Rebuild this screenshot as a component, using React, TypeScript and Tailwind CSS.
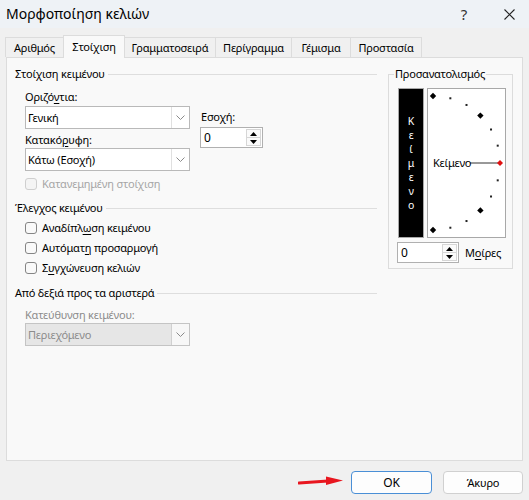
import React from "react";

const Chevron = () => (
  <svg width="9" height="5" viewBox="0 0 9 5">
    <path d="M0.5 0.5 L4.5 4.5 L8.5 0.5" stroke="#8a8a8a" strokeWidth="1" fill="none" />
  </svg>
);

function Select({ value, disabled }: { value: string; disabled?: boolean }) {
  return (
    <div
      className={`flex h-[23px] w-[165px] items-stretch border ${
        disabled ? "border-[#c4c4c4] bg-[#e6e6e6]" : "border-[#b9b9b9] bg-white"
      }`}
    >
      <div className={`flex flex-1 items-center pl-[2px] ${disabled ? "text-[#8c8c8c]" : "text-black"}`}>{value}</div>
      <div
        className={`flex w-[18px] items-center justify-center border-l ${
          disabled ? "border-[#d0d0d0] bg-[#f7f7f7]" : "border-[#e0e0e0] bg-white"
        }`}
      >
        <Chevron />
      </div>
    </div>
  );
}

function Spin({ w }: { w: string }) {
  return (
    <div className={`flex h-[21px] ${w} items-stretch border border-[#b0b0b0] bg-white`}>
      <div className="flex flex-1 items-center pl-[3px] text-[12px]">0</div>
      <div className="my-[1px] mr-[1px] flex w-[15px] flex-col border border-[#d6d6d6] bg-[#fafafa]">
        <div className="flex flex-1 items-center justify-center border-b border-[#d6d6d6]">
          <svg width="7" height="4" viewBox="0 0 7 4">
            <path d="M3.5 0 L7 4 L0 4Z" fill="#000" />
          </svg>
        </div>
        <div className="flex flex-1 items-center justify-center">
          <svg width="7" height="4" viewBox="0 0 7 4">
            <path d="M0 0 L7 0 L3.5 4Z" fill="#000" />
          </svg>
        </div>
      </div>
    </div>
  );
}

function Check({ label, disabled }: { label: React.ReactNode; disabled?: boolean }) {
  return (
    <div className="flex h-[16px] items-center">
      <div
        className={`h-[12px] w-[12px] rounded-[3px] border ${
          disabled ? "border-[#cfcfcf] bg-[#f4f4f4]" : "border-[#858585] bg-[#f9f9f9]"
        }`}
      />
      <span className={`ml-[5px] ${disabled ? "text-[#a6a6a6]" : "text-black"}`}>{label}</span>
    </div>
  );
}

function Header({ text }: { text: string }) {
  return (
    <div className="flex h-[16px] items-center">
      <span>{text}</span>
      <div className="ml-[3px] h-px flex-1 bg-[#dedede]" />
    </div>
  );
}

const U = ({ children }: { children: React.ReactNode }) => (
  <span className="underline decoration-1 underline-offset-2">{children}</span>
);

function Dial() {
  const cx = 5;
  const cy = 74;
  const r = 67;
  const angles = [90, 75, 60, 45, 30, 15, 0, -15, -30, -45, -60, -75, -90];
  return (
    <div className="relative h-[150px] w-[79px] border border-[#a8a8a8] bg-white">
      <svg className="absolute left-0 top-0" width="77" height="148" viewBox="0 0 77 148">
        <line x1="42" y1="74" x2="70" y2="74" stroke="#333" strokeWidth="1" />
        {angles.map((a) => {
          const rad = (a * Math.PI) / 180;
          const x = cx + r * Math.cos(rad);
          const y = cy - r * Math.sin(rad);
          if (a === 0)
            return (
              <polygon
                key={a}
                points={`${x},${y - 3} ${x + 3},${y} ${x},${y + 3} ${x - 3},${y}`}
                fill="#e01010"
              />
            );
          if (a % 45 === 0)
            return (
              <polygon
                key={a}
                points={`${x},${y - 3.2} ${x + 3.2},${y} ${x},${y + 3.2} ${x - 3.2},${y}`}
                fill="#000"
              />
            );
          return <rect key={a} x={x - 1} y={y - 1} width="2" height="2" fill="#222" />;
        })}
      </svg>
      <span className="absolute left-[5px] top-[66px] leading-[16px]">Κείμενο</span>
    </div>
  );
}

export default function App() {
  const tabs = [
    { t: "Αριθμός", w: "w-[59px]" },
    { t: "Στοίχιση", w: "w-[62px]", sel: true },
    { t: "Γραμματοσειρά", w: "w-[92px]" },
    { t: "Περίγραμμα", w: "w-[77px]" },
    { t: "Γέμισμα", w: "w-[60px]" },
    { t: "Προστασία", w: "w-[72px]" },
  ];
  return (
    <div className="h-[500px] w-[529px] overflow-hidden bg-[#f0f0f0] font-['Noto_Sans',sans-serif] text-[11px] leading-[16px] tracking-[-0.2px] text-black">
      {/* title bar */}
      <div className="flex h-[28px] items-center bg-[#eef2f6]">
        <span className="ml-[6px] text-[14px] tracking-normal">Μορφοποίηση κελιών</span>
        <div className="flex-1" />
        <span className="mr-[37px] text-[15px] text-[#333]">?</span>
        <svg className="mr-[14px]" width="11" height="11" viewBox="0 0 11 11">
          <path d="M0.5 0.5 L10.5 10.5 M10.5 0.5 L0.5 10.5" stroke="#222" strokeWidth="1.1" />
        </svg>
      </div>
      {/* tabs */}
      <div className="flex h-[29px] items-end pl-[5px]">
        {tabs.map((tb, i) => (
          <div
            key={tb.t}
            className={`${tb.w} ${i > 0 ? "-ml-px" : ""} flex items-center justify-center border-x border-t border-[#dcdcdc] ${
              tb.sel ? "relative z-10 -mb-px h-[23px] bg-[#f9f9f9]" : "h-[20px] bg-[#f0f0f0]"
            }`}
          >
            {tb.t}
          </div>
        ))}
      </div>
      {/* panel */}
      <div className="ml-[6px] flex h-[404px] w-[517px] border border-[#dcdcdc] bg-[#f9f9f9] pl-[8px] pt-[8px]">
        {/* left column */}
        <div className="flex w-[362px] flex-col">
          <Header text="Στοίχιση κειμένου" />
          <div className="ml-[10px] mt-[7px] flex">
            <div className="flex w-[165px] flex-col">
              <div>
                Οριζό<U>ν</U>τια:
              </div>
              <div className="mt-[1px]">
                <Select value="Γενική" />
              </div>
              <div className="mt-[3px]">
                Κατακό<U>ρ</U>υφη:
              </div>
              <div className="mt-[0px]">
                <Select value="Κάτω (Εσοχή)" />
              </div>
              <div className="mt-[5px]">
                <Check label="Κατανεμημένη στοίχιση" disabled />
              </div>
            </div>
            <div className="ml-[10px] mt-[20px] flex flex-col">
              <div className="pl-[1px]">
                Εσο<U>χ</U>ή:
              </div>
              <div className="mt-[2px]">
                <Spin w="w-[63px]" />
              </div>
            </div>
          </div>
          <div className="mt-[8px]">
            <Header text="Έλεγχος κειμένου" />
          </div>
          <div className="ml-[10px] mt-[4px] flex flex-col gap-[4px]">
            <Check
              label={
                <>
                  Αναδίπλ<U>ω</U>ση κειμένου
                </>
              }
            />
            <Check
              label={
                <>
                  Αυτόματ<U>η</U> προσαρμογή
                </>
              }
            />
            <Check
              label={
                <>
                  Σ<U>υ</U>γχώνευση κελιών
                </>
              }
            />
          </div>
          <div className="mt-[9px]">
            <Header text="Από δεξιά προς τα αριστερά" />
          </div>
          <div className="ml-[10px] mt-[6px] text-[#8c8c8c]">Κατεύθυνση κειμένου:</div>
          <div className="ml-[10px]">
            <Select value="Περιεχόμενο" disabled />
          </div>
        </div>
        {/* orientation */}
        <fieldset className="ml-[11px] h-[203px] w-[125px] border border-[#dcdcdc] pl-[8px]">
          <legend className="-ml-[3px] px-[1px] leading-[16px]">Προσανατολισμός</legend>
          <div className="mt-[6px] flex">
            <div className="ml-[1px] flex h-[150px] w-[26px] flex-col items-center justify-center border border-[#a8a8a8] bg-black text-[10.5px] text-white">
              {"Κείμενο".split("").map((c, i) => (
                <span key={i} className="block h-[14px] leading-[14px]">
                  {c}
                </span>
              ))}
            </div>
            <div className="ml-[3px]">
              <Dial />
            </div>
          </div>
          <div className="mt-[4px] flex items-center">
            <Spin w="w-[62px]" />
            <span className="ml-[6px]">
              Μ<U>ο</U>ίρες
            </span>
          </div>
        </fieldset>
      </div>
      {/* footer */}
      <div className="mt-[10px] flex items-center justify-end pr-[6px]">
        <svg className="-mt-[4px] mr-[7px]" width="46" height="12" viewBox="0 0 46 12">
          <path d="M1 8 L30 6" stroke="#e8161f" strokeWidth="3" strokeLinecap="round" />
          <polygon points="28,1.5 45,5.5 28,10" fill="#e8161f" />
        </svg>
        <div className="flex h-[23px] w-[81px] items-center justify-center rounded-[4px] border border-[#4a8fd6] bg-[#fdfdfd] text-[12px]">
          OK
        </div>
        <div className="ml-[11px] flex h-[23px] w-[80px] items-center justify-center rounded-[4px] border border-[#d0d0d0] bg-[#fdfdfd]">
          Άκυρο
        </div>
      </div>
    </div>
  );
}
